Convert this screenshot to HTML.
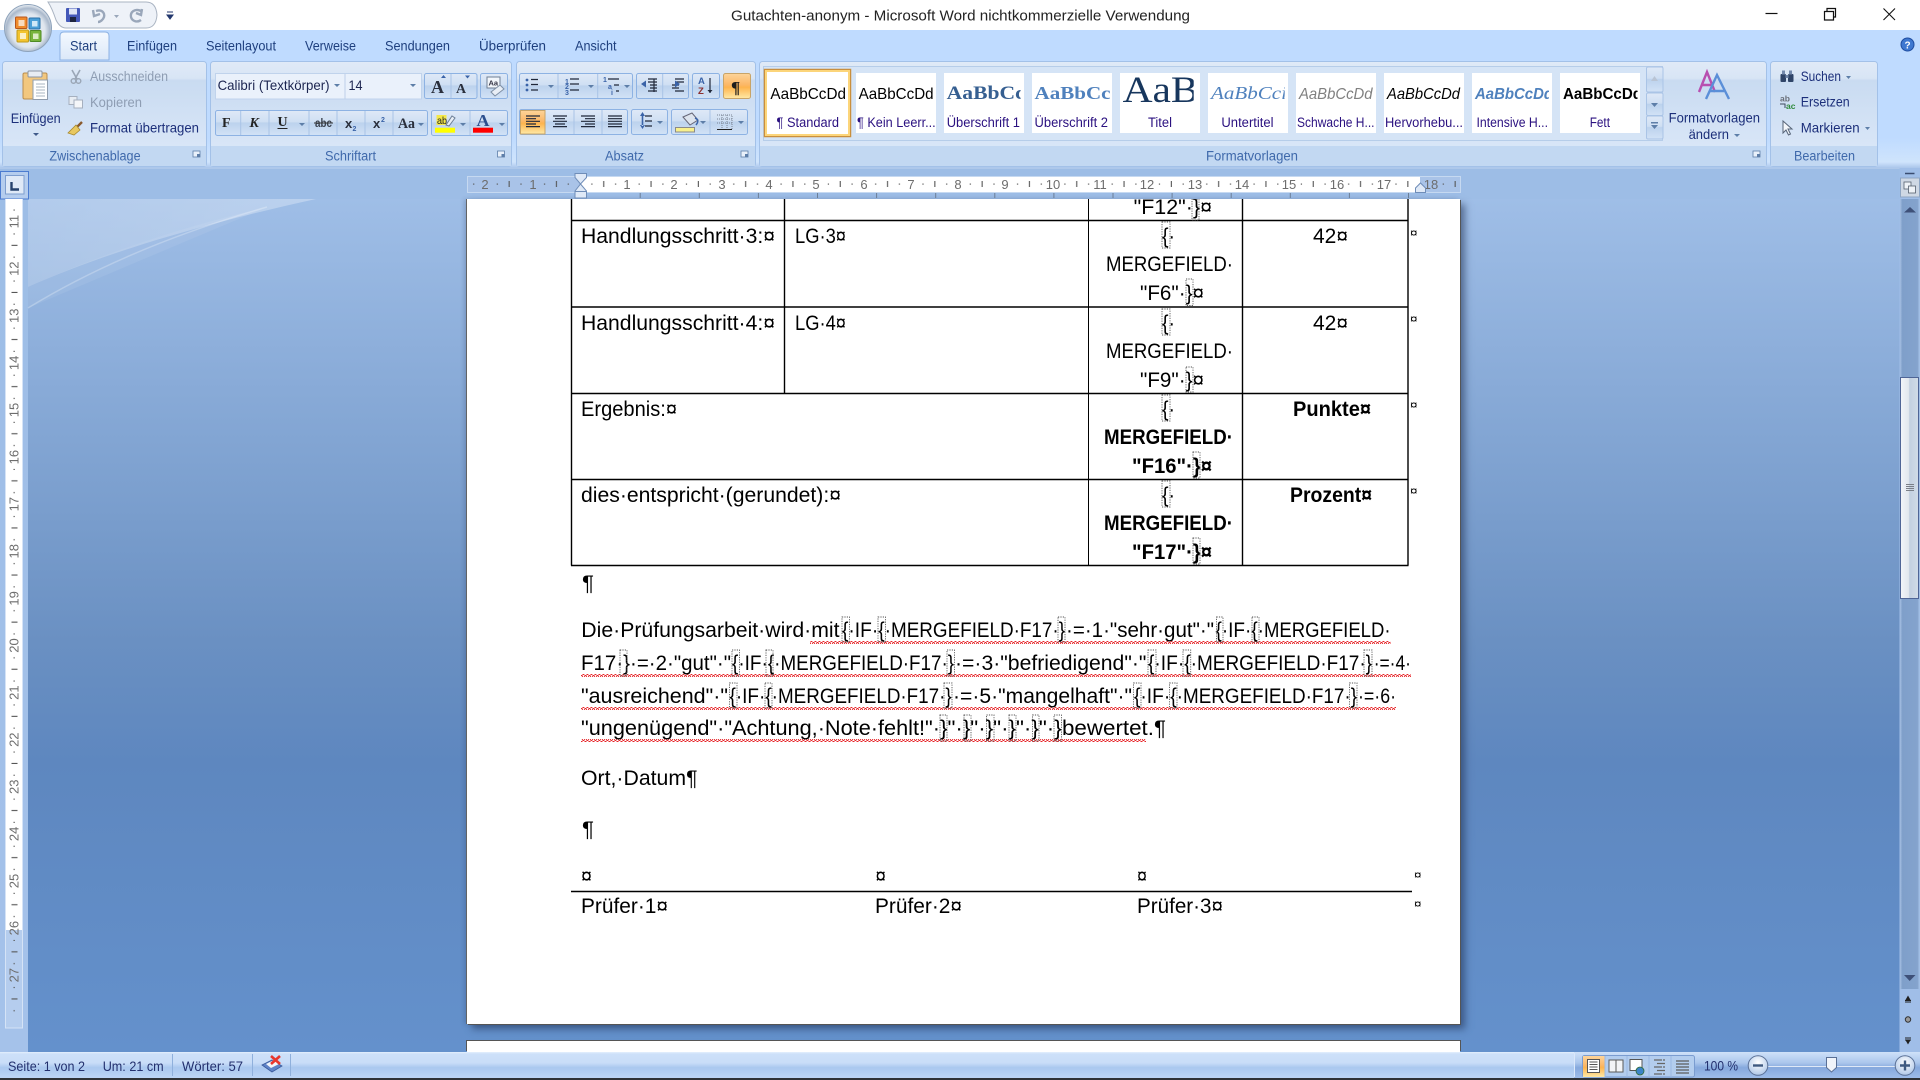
<!DOCTYPE html>
<html lang="de">
<head>
<meta charset="utf-8">
<title>Gutachten-anonym - Microsoft Word</title>
<style>
html,body{margin:0;padding:0;width:1920px;height:1080px;overflow:hidden;background:#fff}
#wrap{position:relative;width:1920px;height:1080px;overflow:hidden}
.abs{position:absolute}
#tabs{left:0;top:30px;width:1920px;height:138px;background:linear-gradient(#bfdbff 0,#bfdbff 108px,#cfe4fc 132px,#aac6ea 138px)}
#rulerbar{left:0;top:168px;width:1920px;height:31px;background:#9dbde6;border-top:1px solid #aec8ea;box-sizing:border-box}
#doc{left:0;top:199px;width:1920px;height:853px;background:linear-gradient(#9fbee7 0,#6a90c2 52%,#5e87bf 66%,#6491cc 100%)}
#leftstrip{left:0;top:199px;width:28px;height:853px;background:linear-gradient(#9dbde6,#a5c2ea)}
#page1{left:467px;top:199px;width:993px;height:825px;background:#fff;box-shadow:1px 1px 0 #555,5px 5px 7px rgba(30,45,80,.55),-1px 0 0 #666,-3px 0 4px rgba(40,60,100,.2)}
#page2{left:467px;top:1041px;width:993px;height:11px;background:#fff;box-shadow:-1px -1px 0 #555,1px -1px 0 #555}
#status{left:0;top:1052px;width:1920px;height:26px;background:linear-gradient(#e4effd 0,#cde0f9 2px,#c9ddf8 42%,#aac8ef 60%,#bcd5f5 100%)}
#status2{left:1574px;top:1052px;width:346px;height:26px;background:linear-gradient(#cfe1f9 0,#aac6ec 42%,#86a9dd 60%,#9dbce9 100%)}
#bottom{left:0;top:1078px;width:1920px;height:2px;background:#2e3236}
svg{position:absolute;left:0;top:0}
text{font-family:"Liberation Sans",sans-serif}
.d{font-size:21px;fill:#000}
.db{font-size:21px;fill:#000;font-weight:bold}
.m{font-size:12px;fill:#000}
.t{font-size:14px;fill:#1e3f7e}
.r{font-size:14px;fill:#1c2f7a}
.g{font-size:14px;fill:#8e9db3}
.l{font-size:13.5px;fill:#3f69ab}
.s{font-size:13.5px;fill:#2b1180}
.rn{font-size:13px;fill:#6d6d6d;text-anchor:middle}
.vn{font-size:13px;fill:#6d6d6d;text-anchor:middle;dominant-baseline:central}
.st{font-size:14px;fill:#23306e}
</style>
</head>
<body>
<div id="wrap">
<div class="abs" id="tabs"></div>
<div class="abs" id="rulerbar"></div>
<div class="abs" id="doc"></div>
<div class="abs" id="leftstrip"></div>
<div class="abs" id="page1"></div>
<div class="abs" id="page2"></div>
<div class="abs" id="status"></div>
<div class="abs" id="status2"></div>
<div class="abs" id="bottom"></div>

<svg width="1920" height="1080" viewBox="0 0 1920 1080">
<defs>
<linearGradient id="grp" x1="0" y1="0" x2="0" y2="1"><stop offset="0" stop-color="#e0eaf7"/><stop offset=".16" stop-color="#d8e5f5"/><stop offset=".18" stop-color="#c9dbf1"/><stop offset="1" stop-color="#dde9f9"/></linearGradient>
<linearGradient id="btn" x1="0" y1="0" x2="0" y2="1"><stop offset="0" stop-color="#dfe9f7"/><stop offset=".45" stop-color="#cfdff3"/><stop offset=".5" stop-color="#bcd2ed"/><stop offset="1" stop-color="#d2e2f6"/></linearGradient>
<linearGradient id="act" x1="0" y1="0" x2="0" y2="1"><stop offset="0" stop-color="#fdd49a"/><stop offset=".45" stop-color="#fbb767"/><stop offset=".55" stop-color="#fdb44e"/><stop offset="1" stop-color="#ffe9a6"/></linearGradient>
<linearGradient id="tab" x1="0" y1="0" x2="0" y2="1"><stop offset="0" stop-color="#f4f9ff"/><stop offset="1" stop-color="#dbe8f8"/></linearGradient>
<linearGradient id="thumb" x1="0" y1="0" x2="1" y2="0"><stop offset="0" stop-color="#f2f5f9"/><stop offset=".45" stop-color="#e2e7ee"/><stop offset=".5" stop-color="#c3d0e0"/><stop offset="1" stop-color="#d1dce8"/></linearGradient>
<linearGradient id="trk" x1="0" y1="0" x2="1" y2="0"><stop offset="0" stop-color="#a5bfe2"/><stop offset=".12" stop-color="#7f9fca"/><stop offset=".9" stop-color="#84a3cd"/><stop offset="1" stop-color="#a6c1e6"/></linearGradient>
<linearGradient id="swoosh" x1="0" y1="0" x2="1" y2="0"><stop offset="0" stop-color="#fff" stop-opacity=".2"/><stop offset="1" stop-color="#fff" stop-opacity=".3"/></linearGradient>
<radialGradient id="orb" cx=".5" cy=".55" r=".55"><stop offset="0" stop-color="#f5f8fc"/><stop offset=".65" stop-color="#dfe6ee"/><stop offset=".85" stop-color="#a9b8cb"/><stop offset="1" stop-color="#eef2f6"/></radialGradient>
<radialGradient id="zoomb" cx=".5" cy=".35" r=".7"><stop offset="0" stop-color="#fff"/><stop offset="1" stop-color="#a9c3e6"/></radialGradient>
<pattern id="wave" patternUnits="userSpaceOnUse" width="4" height="3"><path d="M0 2.5L1 .5L2 .5L3 2.5L4 2.5" fill="none" stroke="#e6262a" stroke-width=".9"/></pattern>
<pattern id="hr" patternUnits="userSpaceOnUse" x="580" y="176" width="47.3" height="16"><rect x="11.3" y="7.5" width="1.2" height="1.2" fill="#555"/><rect x="23.2" y="5" width="1.1" height="6" fill="#555"/><rect x="35" y="7.5" width="1.2" height="1.2" fill="#555"/></pattern>
<pattern id="hb" patternUnits="userSpaceOnUse" x="580.6" y="193" width="59.1" height="5"><rect x="0" y="0" width="1" height="5" fill="#6b7d96"/></pattern>
<pattern id="vr" patternUnits="userSpaceOnUse" x="5" y="221.6" width="18" height="47.1"><rect x="8.5" y="11.8" width="1.3" height="1.1" fill="#555"/><rect x="6.5" y="23.2" width="6" height="1.1" fill="#555"/><rect x="8.5" y="35" width="1.3" height="1.1" fill="#555"/></pattern>
<clipPath id="docclip"><rect x="467" y="199" width="993" height="825"/></clipPath>
<clipPath id="c1"><rect x="944" y="73" width="76.6" height="40"/></clipPath>
<clipPath id="c2"><rect x="1032" y="73" width="78" height="40"/></clipPath>
<clipPath id="c3"><rect x="1120" y="73" width="73.7" height="40"/></clipPath>
<clipPath id="c4"><rect x="1208" y="73" width="76.7" height="40"/></clipPath>
<clipPath id="c5"><rect x="1472" y="73" width="77" height="40"/></clipPath>
<clipPath id="c6"><rect x="1560" y="73" width="77.6" height="40"/></clipPath>
<clipPath id="c7"><rect x="856" y="73" width="78" height="40"/></clipPath>
</defs>

<!-- title bar -->
<text x="731" y="20.5" font-size="15" fill="#222" textLength="459" lengthAdjust="spacingAndGlyphs">Gutachten-anonym - Microsoft Word nichtkommerzielle Verwendung</text>
<path d="M1765.5 13.5H1777.5" stroke="#111" stroke-width="1.2"/>
<path d="M1824.5 11.5h9v8.5h-9zM1827 11.5V8.5h8.5v8.5h-2" fill="none" stroke="#111" stroke-width="1.2"/>
<path d="M1883.5 8.5L1895 20M1895 8.5L1883.5 20" stroke="#111" stroke-width="1.1"/>

<!-- quick access -->
<path d="M48 2H146Q156 2 157 15Q156 28 146 28H66Q60 28 56 20Q52 8 48 2Z" fill="#eef2f8" stroke="#aab4c2"/>
<rect x="66" y="8" width="14" height="14" rx="1" fill="#4458b8"/><rect x="69" y="8.5" width="8" height="6" fill="#dfe5f5"/><rect x="70" y="17" width="6" height="5" fill="#1d2540"/>
<path d="M96 11C102 9 105 13 104 17C103 20 100 22 98 22M93 10L94 16L100 14" fill="none" stroke="#9aa7ba" stroke-width="2.4"/>
<path d="M114 15h5l-2.5 3z" fill="#9aa7ba"/>
<path d="M141 11C135 8 130 12 131 17C132 21 137 23 141 20M142 9L141 15L136 13" fill="none" stroke="#9aa7ba" stroke-width="2.4"/>
<path d="M167 12h6M167 15h6l-3 4z" stroke="#24386e" fill="#24386e" stroke-width="1"/>

<!-- office button -->
<circle cx="28" cy="28" r="23.5" fill="url(#orb)" stroke="#8ea3bb"/>
<rect x="15.5" y="17" width="11.5" height="11.5" rx="1" fill="#ef8b2c" stroke="#b8561c"/><rect x="18.5" y="20" width="6" height="6" fill="#f8dcc0"/>
<rect x="29" y="18" width="11" height="11" rx="1" fill="#4a9fd8" stroke="#2a70a8"/><rect x="32" y="21" width="5.5" height="5.5" fill="#cfe8f8"/>
<rect x="17" y="30" width="11.5" height="12" rx="1" fill="#f3c42f" stroke="#c29a18"/><rect x="20" y="33" width="6" height="6" fill="#fbf0c4"/>
<rect x="30" y="30.5" width="11" height="11" rx="1" fill="#78b43c" stroke="#4f8a24"/><rect x="33" y="33.5" width="5.5" height="5.5" fill="#dcecc4"/>

<!-- tabs -->
<path d="M60 60V36Q60 32 64 32H105Q109 32 109 36V60Z" fill="url(#tab)" stroke="#8db2e3"/>
<text class="t" x="70" y="50.7" textLength="27" lengthAdjust="spacingAndGlyphs">Start</text>
<text class="t" x="127" y="50.7" textLength="50" lengthAdjust="spacingAndGlyphs">Einfügen</text>
<text class="t" x="206" y="50.7" textLength="70" lengthAdjust="spacingAndGlyphs">Seitenlayout</text>
<text class="t" x="305" y="50.7" textLength="51" lengthAdjust="spacingAndGlyphs">Verweise</text>
<text class="t" x="385" y="50.7" textLength="65" lengthAdjust="spacingAndGlyphs">Sendungen</text>
<text class="t" x="479" y="50.7" textLength="67" lengthAdjust="spacingAndGlyphs">Überprüfen</text>
<text class="t" x="575" y="50.7" textLength="41.5" lengthAdjust="spacingAndGlyphs">Ansicht</text>
<circle cx="1907.5" cy="44.5" r="6.5" fill="#3f78d0" stroke="#1f4da0"/><text x="1904.5" y="48.5" font-size="10" font-weight="bold" fill="#fff">?</text>

<!-- ribbon panel groups -->
<g stroke="#a3c1e8">
<rect x="2.5" y="61.5" width="204" height="105" rx="3" fill="url(#grp)"/>
<rect x="210.5" y="61.5" width="301" height="105" rx="3" fill="url(#grp)"/>
<rect x="516.5" y="61.5" width="239" height="105" rx="3" fill="url(#grp)"/>
<rect x="759.5" y="61.5" width="1007" height="105" rx="3" fill="url(#grp)"/>
<rect x="1770.5" y="61.5" width="107" height="105" rx="3" fill="url(#grp)"/>
</g>
<g fill="#c2d8f2">
<rect x="3" y="146" width="203" height="20"/>
<rect x="211" y="146" width="300" height="20"/>
<rect x="517" y="146" width="238" height="20"/>
<rect x="760" y="146" width="1006" height="20"/>
<rect x="1771" y="146" width="106" height="20"/>
</g>
<text class="l" x="49.4" y="160.7" textLength="91.2" lengthAdjust="spacingAndGlyphs">Zwischenablage</text>
<text class="l" x="325" y="160.7" textLength="51" lengthAdjust="spacingAndGlyphs">Schriftart</text>
<text class="l" x="605" y="160.7" textLength="39" lengthAdjust="spacingAndGlyphs">Absatz</text>
<text class="l" x="1206" y="160.7" textLength="92" lengthAdjust="spacingAndGlyphs">Formatvorlagen</text>
<text class="l" x="1794" y="160.7" textLength="61" lengthAdjust="spacingAndGlyphs">Bearbeiten</text>
<g fill="#e8f0fa" stroke="#5d7ea8" stroke-width=".8">
<rect x="193" y="151" width="7" height="6"/><rect x="497.5" y="151" width="7" height="6"/><rect x="741" y="151" width="7" height="6"/><rect x="1753" y="151" width="7" height="6"/>
</g>
<g fill="#5d7ea8"><rect x="197" y="154" width="3" height="3"/><rect x="501.5" y="154" width="3" height="3"/><rect x="745" y="154" width="3" height="3"/><rect x="1757" y="154" width="3" height="3"/></g>

<!-- clipboard group -->
<rect x="23" y="73" width="24" height="26" rx="1.5" fill="#f2c77e" stroke="#b98d4e"/>
<rect x="28" y="71" width="14" height="6" rx="1" fill="#e8edf3" stroke="#8b95a3"/>
<rect x="33" y="80" width="14.5" height="19.5" fill="#fff" stroke="#8f9cad"/>
<path d="M36 84h9M36 87h9M36 90h9M36 93h9M36 96h9" stroke="#aab4c2"/>
<text class="r" x="10.7" y="123" textLength="50" lengthAdjust="spacingAndGlyphs">Einfügen</text>
<path d="M33 133h6l-3 3z" fill="#405a8a"/>
<path d="M72 70L77 79M80 70L75 79" stroke="#9aa6b6" stroke-width="1.6"/><circle cx="73.5" cy="81" r="2.3" fill="none" stroke="#9aa6b6" stroke-width="1.4"/><circle cx="78.5" cy="81" r="2.3" fill="none" stroke="#9aa6b6" stroke-width="1.4"/>
<text class="g" x="90" y="81" textLength="78" lengthAdjust="spacingAndGlyphs">Ausschneiden</text>
<rect x="69" y="96.5" width="8" height="8" fill="#e8edf3" stroke="#a6b0bf"/><rect x="74" y="100" width="8.5" height="8" fill="#f4f6f9" stroke="#a6b0bf"/>
<text class="g" x="90" y="107" textLength="52" lengthAdjust="spacingAndGlyphs">Kopieren</text>
<path d="M82 122L76 128" stroke="#8a5a2c" stroke-width="2.4"/><path d="M76 125L80 130L74 135L68 133Z" fill="#e8c860" stroke="#a88a30" stroke-width=".8"/>
<text class="r" x="90" y="132.7" textLength="109" lengthAdjust="spacingAndGlyphs">Format übertragen</text>

<!-- font group -->
<rect x="215.5" y="73.5" width="206" height="25.5" fill="#eaf1fb" stroke="#c0d3ec"/>
<path d="M345 74V99" stroke="#bdd0e9"/>
<text x="217.6" y="90" font-size="14" fill="#1c2550" textLength="112" lengthAdjust="spacingAndGlyphs">Calibri (Textkörper)</text>
<text x="348.5" y="90" font-size="14" fill="#1c2550" textLength="14" lengthAdjust="spacingAndGlyphs">14</text>
<path d="M334 84h6l-3 3zM410 84h6l-3 3z" fill="#5d7ea8"/>
<g stroke="#8db2e3" fill="url(#btn)">
<rect x="424.5" y="73.5" width="52.5" height="25" rx="2"/>
<rect x="480.5" y="73.5" width="27" height="25" rx="2"/>
<rect x="215.5" y="110.5" width="212" height="25" rx="2"/>
<rect x="431.5" y="110.5" width="76" height="25" rx="2"/>
<rect x="519.5" y="73.5" width="113" height="25" rx="2"/>
<rect x="636.5" y="73.5" width="52" height="25" rx="2"/>
<rect x="692.5" y="73.5" width="27" height="25" rx="2"/>
<rect x="519.5" y="109.5" width="108" height="25" rx="2"/>
<rect x="631.5" y="109.5" width="36" height="25" rx="2"/>
<rect x="671.5" y="109.5" width="76" height="25" rx="2"/>
</g>
<rect x="723.5" y="73.5" width="27" height="25" rx="2" fill="url(#act)" stroke="#c8a468"/>
<path d="M520.5 110.5H545V134H520.5Z" fill="url(#act)" stroke="#c8a468"/>
<path d="M451 74V98M240.7 111V135M269 111V135M309 111V135M337 111V135M365 111V135M393 111V135M470 111V135M558 74V98M597.7 74V98M662.7 74V98M574 110V134M602 110V134M710 110V134" stroke="#a9c3e6"/>
<text x="431" y="93" font-family="Liberation Serif" font-size="18" font-weight="bold" fill="#2a2f3c" style="font-family:'Liberation Serif',serif">A</text>
<text x="456" y="93" font-size="14" font-weight="bold" fill="#2a2f3c" style="font-family:'Liberation Serif',serif">A</text>
<path d="M441 78l2.5-3 2.5 3zM465 75.5h5l-2.5 3z" fill="#3a63a8"/>
<rect x="487" y="77" width="13" height="11" fill="#f2f6fb" stroke="#6f7f94"/><text x="488.5" y="85.5" font-size="7.5" font-weight="bold" fill="#334">Aa</text>
<path d="M491 92L500 85L504 89L495 96Z" fill="#e8eef6" stroke="#7d8ea4"/>
<text x="222" y="127" font-size="14" font-weight="bold" fill="#222" style="font-family:'Liberation Serif',serif">F</text>
<text x="249.5" y="127" font-size="14" font-weight="bold" font-style="italic" fill="#222" style="font-family:'Liberation Serif',serif">K</text>
<text x="277.5" y="126" font-size="14" font-weight="bold" fill="#222" style="font-family:'Liberation Serif',serif">U</text><path d="M277.5 128.5h10" stroke="#222"/>
<path d="M299 123h6l-3 3zM418 123h6l-3 3zM460 123h6l-3 3zM499 123h6l-3 3z" fill="#5d7ea8"/>
<text x="315" y="127" font-size="12" font-weight="bold" fill="#3c4350" textLength="17" lengthAdjust="spacingAndGlyphs">abc</text><path d="M314 123h19" stroke="#333"/>
<text x="345" y="128" font-size="13" font-weight="bold" fill="#2a2f3c">x</text><text x="352.5" y="131" font-size="7" font-weight="bold" fill="#3a63a8">2</text>
<text x="373" y="128" font-size="13" font-weight="bold" fill="#2a2f3c">x</text><text x="381" y="122" font-size="7" font-weight="bold" fill="#3a63a8">2</text>
<text x="398" y="128" font-size="15" font-weight="bold" fill="#2a2f3c" style="font-family:'Liberation Serif',serif" textLength="17" lengthAdjust="spacingAndGlyphs">Aa</text>
<rect x="436.5" y="115" width="10" height="10" fill="#f4e84a"/><text x="437" y="124" font-size="10.5" fill="#222" textLength="10" lengthAdjust="spacingAndGlyphs">ab</text>
<path d="M446 125L452 116L455 118L449 126Z" fill="#e8eef6" stroke="#6d7f97"/>
<rect x="435" y="127.7" width="20" height="5" fill="#ffff00"/>
<text x="476.5" y="126" font-size="17" font-weight="bold" fill="#2c4f8e" style="font-family:'Liberation Serif',serif" textLength="13" lengthAdjust="spacingAndGlyphs">A</text>
<rect x="473" y="127.7" width="20" height="5" fill="#ff0000"/>

<!-- paragraph group -->
<g stroke="#20283a" stroke-width="1.2" fill="none">
<path d="M531 79.5h7M531 84.5h7M531 90h7M531 85"/>
<path d="M570 79h9M570 84h9M570 90h9"/>
<path d="M608 79h11M614 85h5M616 91h3"/>
<path d="M648 79h9M648 82h9M650 85h7M650 88h7M648 91h9M654 79v13"/>
<path d="M675 79h9M675 82h9M672 85h7M672 88h7M675 91h9"/>
<path d="M710 78v15"/>
<path d="M526 116h14M526 118.7h10M526 121.3h14M526 124h10M526 126.6h14" />
<path d="M553 116h14M555 118.7h10M553 121.3h14M555 124h10M553 126.6h14"/>
<path d="M581 116h14M585 118.7h10M581 121.3h14M585 124h10M581 126.6h14"/>
<path d="M608 116h14M608 118.7h14M608 121.3h14M608 124h14M608 126.6h14"/>
<path d="M645 116h7M645 121h7M645 126h7"/>
</g>
<g fill="#3a63a8">
<circle cx="527" cy="80" r="1.4"/><circle cx="527" cy="85" r="1.4"/><circle cx="527" cy="90" r="1.4"/>
<path d="M641 84l5-3.5v7zM680 84l-5-3.5v7zM638.5 84h0z"/>
<path d="M640 116l2.5-4 2.5 4zM640 125l2.5 4 2.5-4zM641.7 115h1.6v11h-1.6z"/>
</g>
<text x="565" y="84" font-size="7" font-weight="bold" fill="#3a63a8">1</text><text x="565" y="89" font-size="7" font-weight="bold" fill="#3a63a8">2</text><text x="565" y="95" font-size="7" font-weight="bold" fill="#3a63a8">3</text>
<text x="603" y="82" font-size="7" font-weight="bold" fill="#3a63a8">1</text><text x="608" y="89" font-size="7" font-weight="bold" fill="#3a63a8">a</text><text x="611" y="95" font-size="7" font-weight="bold" fill="#3a63a8">i</text>
<path d="M548 85h6l-3 3zM588 85h6l-3 3zM624 85h6l-3 3zM657 121h6l-3 3zM700 121h6l-3 3zM738 121h6l-3 3z" fill="#5d7ea8"/>
<text x="698" y="84" font-size="9.5" font-weight="bold" fill="#3a63a8">A</text><text x="698" y="94" font-size="9.5" font-weight="bold" fill="#8b3030">Z</text>
<path d="M710 93l-2.5-3h5z" fill="#20283a"/>
<text x="731" y="93" font-size="17" font-weight="bold" fill="#1c1c1c" style="font-family:'Liberation Serif',serif">¶</text>
<path d="M683 117L692 113L698 120L690 125Z" fill="#dde4ee" stroke="#667"/><path d="M695 118q5 2 1 7" stroke="#3a63a8" stroke-width="1.5" fill="none"/>
<rect x="675.5" y="127.5" width="19" height="4.5" fill="#f8f08c" stroke="#8a8a8a"/>
<path d="M717 115h15v14M717 119h15M717 123h15M722 115v14M727 115v14" stroke="#7a8494" stroke-dasharray="1 1" fill="none"/><path d="M717 129.5h15" stroke="#222"/>

<!-- style gallery -->
<rect x="763.5" y="66.5" width="899" height="74" fill="#d5e4f6" stroke="#b6cde9"/>
<rect x="764.5" y="69.5" width="86" height="67" fill="#fff" stroke="#c98f3e" stroke-width="1.5"/>
<rect x="766" y="71" width="83" height="64" fill="none" stroke="#fcd57a" stroke-width="2"/>
<g fill="#fff"><rect x="856" y="73" width="80" height="60"/><rect x="944" y="73" width="80" height="60"/><rect x="1032" y="73" width="80" height="60"/><rect x="1120" y="73" width="80" height="60"/><rect x="1208" y="73" width="80" height="60"/><rect x="1296" y="73" width="80" height="60"/><rect x="1384" y="73" width="80" height="60"/><rect x="1472" y="73" width="80" height="60"/><rect x="1560" y="73" width="80" height="60"/></g>
<text x="770.4" y="99" font-size="16" fill="#000" textLength="75.6" lengthAdjust="spacingAndGlyphs">AaBbCcDd</text>
<text x="858.6" y="99" font-size="16" fill="#000" textLength="75" lengthAdjust="spacingAndGlyphs">AaBbCcDd</text>
<text x="946.7" y="99" font-size="19" font-weight="bold" fill="#365f91" style="font-family:'Liberation Serif',serif" clip-path="url(#c1)" textLength="78" lengthAdjust="spacingAndGlyphs">AaBbCc</text>
<text x="1034.5" y="99" font-size="17.5" font-weight="bold" fill="#4f81bd" style="font-family:'Liberation Serif',serif" clip-path="url(#c2)" textLength="76" lengthAdjust="spacingAndGlyphs">AaBbCc</text>
<text x="1122.6" y="102" font-size="37" fill="#17365d" style="font-family:'Liberation Serif',serif" clip-path="url(#c3)" textLength="76" lengthAdjust="spacingAndGlyphs">AaB</text>
<text x="1211" y="99" font-size="17.5" font-style="italic" fill="#4f81bd" style="font-family:'Liberation Serif',serif" clip-path="url(#c4)" textLength="76" lengthAdjust="spacingAndGlyphs">AaBbCci</text>
<text x="1299" y="99" font-size="16" font-style="italic" fill="#808080" textLength="73.5" lengthAdjust="spacingAndGlyphs">AaBbCcDd</text>
<text x="1387" y="99" font-size="16" font-style="italic" fill="#000" textLength="73" lengthAdjust="spacingAndGlyphs">AaBbCcDd</text>
<text x="1475" y="99" font-size="16" font-style="italic" font-weight="bold" fill="#4f81bd" clip-path="url(#c5)" textLength="78" lengthAdjust="spacingAndGlyphs">AaBbCcDd</text>
<text x="1563" y="99" font-size="16" font-weight="bold" fill="#000" clip-path="url(#c6)" textLength="79" lengthAdjust="spacingAndGlyphs">AaBbCcDd</text>
<text class="s" x="776.5" y="127" textLength="62.5" lengthAdjust="spacingAndGlyphs">¶ Standard</text>
<text class="s" x="857" y="127" textLength="78.7" lengthAdjust="spacingAndGlyphs">¶ Kein Leerr...</text>
<text class="s" x="946.7" y="127" textLength="73.3" lengthAdjust="spacingAndGlyphs">Überschrift 1</text>
<text class="s" x="1034.5" y="127" textLength="73.5" lengthAdjust="spacingAndGlyphs">Überschrift 2</text>
<text class="s" x="1148" y="127" textLength="24" lengthAdjust="spacingAndGlyphs">Titel</text>
<text class="s" x="1221.4" y="127" textLength="52.2" lengthAdjust="spacingAndGlyphs">Untertitel</text>
<text class="s" x="1297" y="127" textLength="77.5" lengthAdjust="spacingAndGlyphs">Schwache H...</text>
<text class="s" x="1385" y="127" textLength="78" lengthAdjust="spacingAndGlyphs">Hervorhebu...</text>
<text class="s" x="1476.5" y="127" textLength="71.5" lengthAdjust="spacingAndGlyphs">Intensive H...</text>
<text class="s" x="1589.7" y="127" textLength="20.3" lengthAdjust="spacingAndGlyphs">Fett</text>
<g stroke="#aac4e6" fill="url(#btn)"><rect x="1646.5" y="67" width="16.5" height="25" rx="1.5"/><rect x="1646.5" y="93" width="16.5" height="22.5" rx="1.5"/><rect x="1646.5" y="116" width="16.5" height="23" rx="1.5"/></g>
<path d="M1651 81l3.500-5 3.500 5z" fill="#b9c4d4"/><path d="M1651 103h7l-3.500 4z" fill="#5d7ea8"/><path d="M1651 122h7v1.500h-7zM1651 125h7l-3.500 4z" fill="#5d7ea8"/>
<path d="M1699 92L1707 72L1715 92M1702.500 85H1712" fill="none" stroke="#b84fb0" stroke-width="2.400"/>
<path d="M1706 99L1717 75L1729 99M1710 91H1724" fill="none" stroke="#5b8fd8" stroke-width="2.400"/>
<text class="r" x="1668.600" y="122.700" textLength="91.400" lengthAdjust="spacingAndGlyphs">Formatvorlagen</text>
<text class="r" x="1688.600" y="139" textLength="40.400" lengthAdjust="spacingAndGlyphs">ändern</text>
<path d="M1734 134h6l-3 3z" fill="#5d7ea8"/>

<!-- edit group -->
<rect x="1780.500" y="74" width="5.500" height="8" rx="1" fill="#2f4468"/><rect x="1788" y="74" width="5.500" height="8" rx="1" fill="#2f4468"/><rect x="1782" y="70.500" width="3" height="4" fill="#7389ad"/><rect x="1789" y="70.500" width="3" height="4" fill="#7389ad"/><rect x="1785.500" y="75" width="3" height="3" fill="#7389ad"/>
<text class="r" x="1800.700" y="81" textLength="40.300" lengthAdjust="spacingAndGlyphs">Suchen</text>
<path d="M1846 76h5l-2.500 3z" fill="#5d7ea8"/>
<text x="1780" y="101.500" font-size="8.500" font-weight="bold" fill="#6a6f78">ab</text>
<text x="1786" y="109" font-size="8.500" font-weight="bold" fill="#2f8a3c">ac</text>
<path d="M1780 104h5v4" fill="none" stroke="#3d4a5e"/>
<text class="r" x="1800.700" y="106.700" textLength="49" lengthAdjust="spacingAndGlyphs">Ersetzen</text>
<path d="M1783 121V133L1786 130L1788.500 135L1790.500 134L1788 129H1792Z" fill="#f4f7fb" stroke="#566478"/>
<text class="r" x="1800.700" y="132.700" textLength="59" lengthAdjust="spacingAndGlyphs">Markieren</text>
<path d="M1865 127h5l-2.500 3z" fill="#5d7ea8"/>

<!-- swoosh on document background -->
<path d="M28 199H316C220 220 110 250 28 287Z" fill="url(#swoosh)"/>
<path d="M28 308C90 270 170 235 267 207" fill="none" stroke="#fff" stroke-opacity=".25" stroke-width="1.500"/>
<path d="M28 287C110 250 190 225 267 207L28 308Z" fill="#fff" fill-opacity=".07"/>

<!-- horizontal ruler -->
<rect x="467.500" y="176.500" width="993" height="16" fill="#a9c3e8" stroke="#c6d9f1"/>
<rect x="580" y="177" width="840" height="15" fill="#fff"/>
<rect x="467" y="176" width="994" height="16" fill="url(#hr)"/>
<rect x="580" y="193" width="830" height="5" fill="url(#hb)"/>
<g>
<text class="rn" x="485" y="189">2</text><text class="rn" x="533" y="189">1</text>
<text class="rn" x="627" y="189">1</text><text class="rn" x="674" y="189">2</text><text class="rn" x="722" y="189">3</text><text class="rn" x="769" y="189">4</text><text class="rn" x="816" y="189">5</text><text class="rn" x="864" y="189">6</text><text class="rn" x="911" y="189">7</text><text class="rn" x="958" y="189">8</text><text class="rn" x="1005" y="189">9</text><text class="rn" x="1053" y="189">10</text><text class="rn" x="1100" y="189">11</text><text class="rn" x="1147" y="189">12</text><text class="rn" x="1195" y="189">13</text><text class="rn" x="1242" y="189">14</text><text class="rn" x="1289" y="189">15</text><text class="rn" x="1337" y="189">16</text><text class="rn" x="1384" y="189">17</text><text class="rn" x="1431" y="189">18</text>
</g>
<path d="M575 173.500H586.500V177.500L580.500 184L575 177.500Z" fill="#dfe9f7" stroke="#6f8db8"/>
<path d="M580.500 184L586.500 191V198H575V191Z" fill="#dfe9f7" stroke="#6f8db8"/><path d="M575 191.500H586.500" stroke="#6f8db8"/>
<path d="M1415.500 192.500V188L1420.500 183L1425.500 188V192.500Z" fill="#dfe9f7" stroke="#6f8db8"/>

<!-- corner tab button -->
<rect x="0.500" y="171.500" width="28" height="27.500" fill="#b5cdee" stroke="#4c7cd0"/>
<rect x="5.500" y="175.500" width="18.500" height="18.500" fill="#dfe9f7" stroke="#7e9ecf"/>
<path d="M11.500 182V189.500H19" fill="none" stroke="#26426e" stroke-width="2.400"/>

<!-- vertical ruler -->
<rect x="5" y="199" width="18" height="731" fill="#fff"/>
<rect x="5" y="930" width="18" height="98" fill="#b5cdee"/>
<path d="M5.500 199V1028H22.500V199" fill="none" stroke="#d5e3f6"/>
<rect x="5" y="199" width="18" height="829" fill="url(#vr)"/>
<g>
<text class="vn" transform="rotate(-90 14 221.600)" x="14" y="221.600">11</text>
<text class="vn" transform="rotate(-90 14 268.700)" x="14" y="268.700">12</text>
<text class="vn" transform="rotate(-90 14 315.800)" x="14" y="315.800">13</text>
<text class="vn" transform="rotate(-90 14 362.900)" x="14" y="362.900">14</text>
<text class="vn" transform="rotate(-90 14 410)" x="14" y="410">15</text>
<text class="vn" transform="rotate(-90 14 457.100)" x="14" y="457.100">16</text>
<text class="vn" transform="rotate(-90 14 504.200)" x="14" y="504.200">17</text>
<text class="vn" transform="rotate(-90 14 551.300)" x="14" y="551.300">18</text>
<text class="vn" transform="rotate(-90 14 598.400)" x="14" y="598.400">19</text>
<text class="vn" transform="rotate(-90 14 645.500)" x="14" y="645.500">20</text>
<text class="vn" transform="rotate(-90 14 692.600)" x="14" y="692.600">21</text>
<text class="vn" transform="rotate(-90 14 739.700)" x="14" y="739.700">22</text>
<text class="vn" transform="rotate(-90 14 786.800)" x="14" y="786.800">23</text>
<text class="vn" transform="rotate(-90 14 833.900)" x="14" y="833.900">24</text>
<text class="vn" transform="rotate(-90 14 881)" x="14" y="881">25</text>
<text class="vn" transform="rotate(-90 14 928.100)" x="14" y="928.100">26</text>
<text class="vn" transform="rotate(-90 14 975.200)" x="14" y="975.200">27</text>
</g>

<!-- document content -->
<g clip-path="url(#docclip)">
<!-- table lines -->
<g stroke="#000" stroke-width="1.400">
<path d="M571.500 199V565.500M784.500 199V393.500M1242.500 199V565.500M1408 199V565.500"/>
<path d="M571 220.500H1408.500M571 307H1408.500M571 393.500H1408.500M571 479.500H1408.500M571 565.500H1408.500"/>
</g>
<path d="M1088.500 199V565.500" stroke="#000" stroke-width="1"/>
<!-- row 2 tail -->
<text class="d" x="1133.600" y="214" textLength="78.400" lengthAdjust="spacingAndGlyphs">"F12"·}¤</text>
<!-- row 3 -->
<text class="d" x="581" y="243" textLength="194" lengthAdjust="spacingAndGlyphs">Handlungsschritt·3:¤</text>
<text class="d" x="795" y="243" textLength="51" lengthAdjust="spacingAndGlyphs">LG·3¤</text>
<text class="d" x="1162" y="243" textLength="13" lengthAdjust="spacingAndGlyphs">{·</text>
<text class="d" x="1106" y="271" textLength="127" lengthAdjust="spacingAndGlyphs">MERGEFIELD·</text>
<text class="d" x="1140" y="300" textLength="64" lengthAdjust="spacingAndGlyphs">"F6"·}¤</text>
<text class="d" x="1313" y="243" textLength="35" lengthAdjust="spacingAndGlyphs">42¤</text>
<text class="m" x="1410" y="237" textLength="7.500" lengthAdjust="spacingAndGlyphs">¤</text>
<!-- row 4 -->
<text class="d" x="581" y="330" textLength="194" lengthAdjust="spacingAndGlyphs">Handlungsschritt·4:¤</text>
<text class="d" x="795" y="330" textLength="51" lengthAdjust="spacingAndGlyphs">LG·4¤</text>
<text class="d" x="1162" y="330" textLength="13" lengthAdjust="spacingAndGlyphs">{·</text>
<text class="d" x="1106" y="358" textLength="127" lengthAdjust="spacingAndGlyphs">MERGEFIELD·</text>
<text class="d" x="1140" y="387" textLength="64" lengthAdjust="spacingAndGlyphs">"F9"·}¤</text>
<text class="d" x="1313" y="330" textLength="35" lengthAdjust="spacingAndGlyphs">42¤</text>
<text class="m" x="1410" y="323" textLength="7.500" lengthAdjust="spacingAndGlyphs">¤</text>
<!-- row 5 -->
<text class="d" x="581" y="416" textLength="96" lengthAdjust="spacingAndGlyphs">Ergebnis:¤</text>
<text class="d" x="1162" y="416" textLength="13" lengthAdjust="spacingAndGlyphs">{·</text>
<text class="db" x="1104" y="444" textLength="129" lengthAdjust="spacingAndGlyphs">MERGEFIELD·</text>
<text class="db" x="1132" y="473" textLength="80" lengthAdjust="spacingAndGlyphs">"F16"·}¤</text>
<text class="db" x="1293" y="416" textLength="78" lengthAdjust="spacingAndGlyphs">Punkte¤</text>
<text class="m" x="1410" y="409" textLength="7.500" lengthAdjust="spacingAndGlyphs">¤</text>
<!-- row 6 -->
<text class="d" x="581" y="502" textLength="260" lengthAdjust="spacingAndGlyphs">dies·entspricht·(gerundet):¤</text>
<text class="d" x="1162" y="502" textLength="13" lengthAdjust="spacingAndGlyphs">{·</text>
<text class="db" x="1104" y="530" textLength="129" lengthAdjust="spacingAndGlyphs">MERGEFIELD·</text>
<text class="db" x="1132" y="559" textLength="80" lengthAdjust="spacingAndGlyphs">"F17"·}¤</text>
<text class="db" x="1290" y="502" textLength="82" lengthAdjust="spacingAndGlyphs">Prozent¤</text>
<text class="m" x="1410" y="495" textLength="7.500" lengthAdjust="spacingAndGlyphs">¤</text>
<!-- field boxes in table -->
<g fill="none" stroke="#555" stroke-width=".9" stroke-dasharray="1.200 1.200">
<rect x="1192" y="199" width="7" height="21"/>
<rect x="1162" y="222" width="8" height="26"/><rect x="1186" y="279" width="7" height="26.500"/>
<rect x="1162" y="309" width="8" height="26"/><rect x="1186" y="367" width="7" height="25"/>
<rect x="1162" y="395" width="8" height="26"/><rect x="1193" y="452" width="7" height="26"/>
<rect x="1162" y="481" width="8" height="26"/><rect x="1193" y="538" width="7" height="26"/>
</g>
<text class="d" x="582" y="590" textLength="12" lengthAdjust="spacingAndGlyphs">¶</text>

<!-- paragraph -->
<rect x="810" y="641" width="580.500" height="3" fill="url(#wave)"/>
<rect x="581" y="674" width="830" height="3" fill="url(#wave)"/>
<rect x="581" y="707" width="815" height="3" fill="url(#wave)"/>
<rect x="581" y="739" width="565" height="3" fill="url(#wave)"/>
<!-- line 1 -->
<text class="d" x="581.300" y="637" textLength="258.200" lengthAdjust="spacingAndGlyphs">Die·Prüfungsarbeit·wird·mit</text>
<text class="d" x="842" y="637" textLength="49" lengthAdjust="spacingAndGlyphs">{·IF·{·</text>
<text class="d" x="891" y="637" textLength="174" lengthAdjust="spacingAndGlyphs">MERGEFIELD·F17·}</text>
<text class="d" x="1066" y="637" textLength="148" lengthAdjust="spacingAndGlyphs">·=·1·"sehr·gut"·"</text>
<text class="d" x="1215.500" y="637" textLength="48.500" lengthAdjust="spacingAndGlyphs">{·IF·{·</text>
<text class="d" x="1264" y="637" textLength="126.500" lengthAdjust="spacingAndGlyphs">MERGEFIELD·</text>
<!-- line 2 -->
<text class="d" x="581" y="670" textLength="150" lengthAdjust="spacingAndGlyphs">F17·}·=·2·"gut"·"</text>
<text class="d" x="732" y="670" textLength="48.500" lengthAdjust="spacingAndGlyphs">{·IF·{·</text>
<text class="d" x="780.500" y="670" textLength="173.500" lengthAdjust="spacingAndGlyphs">MERGEFIELD·F17·}</text>
<text class="d" x="955" y="670" textLength="191.400" lengthAdjust="spacingAndGlyphs">·=·3·"befriedigend"·"</text>
<text class="d" x="1148" y="670" textLength="49" lengthAdjust="spacingAndGlyphs">{·IF·{·</text>
<text class="d" x="1197" y="670" textLength="175" lengthAdjust="spacingAndGlyphs">MERGEFIELD·F17·}</text>
<text class="d" x="1373.700" y="670" textLength="37.300" lengthAdjust="spacingAndGlyphs">·=·4·</text>
<!-- line 3 -->
<text class="d" x="581" y="703" textLength="147" lengthAdjust="spacingAndGlyphs">"ausreichend"·"</text>
<text class="d" x="729.500" y="703" textLength="48.500" lengthAdjust="spacingAndGlyphs">{·IF·{·</text>
<text class="d" x="778" y="703" textLength="173.700" lengthAdjust="spacingAndGlyphs">MERGEFIELD·F17·}</text>
<text class="d" x="953" y="703" textLength="179" lengthAdjust="spacingAndGlyphs">·=·5·"mangelhaft"·"</text>
<text class="d" x="1134" y="703" textLength="49" lengthAdjust="spacingAndGlyphs">{·IF·{·</text>
<text class="d" x="1183" y="703" textLength="174" lengthAdjust="spacingAndGlyphs">MERGEFIELD·F17·}</text>
<text class="d" x="1358" y="703" textLength="38" lengthAdjust="spacingAndGlyphs">·=·6·</text>
<!-- line 4 -->
<text class="d" x="581" y="735" textLength="359" lengthAdjust="spacingAndGlyphs">"ungenügend"·"Achtung,·Note·fehlt!"·</text>
<text class="d" x="940" y="735" textLength="121.700" lengthAdjust="spacingAndGlyphs">}"·}"·}"·}"·}"·}</text>
<text class="d" x="1062" y="735" textLength="104" lengthAdjust="spacingAndGlyphs">bewertet.¶</text>
<!-- field boxes in paragraph -->
<g fill="none" stroke="#555" stroke-width=".9" stroke-dasharray="1.200 1.200">
<rect x="842" y="617" width="7.500" height="25"/><rect x="878" y="617" width="7.500" height="25"/><rect x="1058" y="617" width="7" height="25"/><rect x="1216.500" y="617" width="6.500" height="25"/><rect x="1252" y="617" width="7" height="25"/>
<rect x="620" y="650" width="7" height="26"/><rect x="732" y="650" width="7.500" height="26"/><rect x="766" y="650" width="7" height="26"/><rect x="947" y="650" width="7.500" height="26"/><rect x="1148" y="650" width="8" height="26"/><rect x="1183" y="650" width="7.700" height="26"/><rect x="1364" y="650" width="8" height="26"/>
<rect x="729.500" y="683" width="7.500" height="25"/><rect x="765" y="683" width="7" height="25"/><rect x="944" y="683" width="8" height="25"/><rect x="1133.500" y="683" width="7.500" height="25"/><rect x="1169.500" y="683" width="7.500" height="25"/><rect x="1349.500" y="683" width="7.500" height="25"/>
<rect x="940" y="715" width="7" height="26"/><rect x="964" y="715" width="7" height="26"/><rect x="986.500" y="715" width="7.500" height="26"/><rect x="1009" y="715" width="7" height="26"/><rect x="1032.500" y="715" width="6.500" height="26"/><rect x="1054" y="715" width="7.500" height="26"/>
</g>
<text class="d" x="581" y="785" textLength="116.500" lengthAdjust="spacingAndGlyphs">Ort,·Datum¶</text>
<text class="d" x="582" y="836" textLength="12" lengthAdjust="spacingAndGlyphs">¶</text>
<!-- signature table -->
<text class="d" x="581" y="883" textLength="11" lengthAdjust="spacingAndGlyphs">¤</text>
<text class="d" x="875.400" y="883" textLength="10.600" lengthAdjust="spacingAndGlyphs">¤</text>
<text class="d" x="1137" y="883" textLength="10" lengthAdjust="spacingAndGlyphs">¤</text>
<text class="m" x="1414" y="879" textLength="7.500" lengthAdjust="spacingAndGlyphs">¤</text>
<path d="M571 891.500H1412" stroke="#000" stroke-width="1.400"/>
<text class="d" x="581" y="913" textLength="87" lengthAdjust="spacingAndGlyphs">Prüfer·1¤</text>
<text class="d" x="875" y="913" textLength="87" lengthAdjust="spacingAndGlyphs">Prüfer·2¤</text>
<text class="d" x="1137" y="913" textLength="86" lengthAdjust="spacingAndGlyphs">Prüfer·3¤</text>
<text class="m" x="1414" y="908" textLength="7.500" lengthAdjust="spacingAndGlyphs">¤</text>
</g>

<!-- right scrollbar -->
<rect x="1899.500" y="168" width="20.500" height="884" fill="#a0bee8"/>
<rect x="1900" y="199" width="19.500" height="790" fill="url(#trk)"/>
<path d="M1905 173.500H1914.500" stroke="#3a4c70" stroke-width="1.500"/>
<rect x="1900.500" y="178" width="19" height="19" fill="#cfd8e4" stroke="#8fa6c4"/>
<rect x="1904" y="182" width="7" height="7" fill="#eef2f7" stroke="#55606f" stroke-width=".8"/><rect x="1908.500" y="186" width="7" height="7" fill="#eef2f7" stroke="#55606f" stroke-width=".8"/>
<path d="M1904 212.500L1910 207L1916 212.500Z" fill="#3e5078"/>
<rect x="1900.500" y="377.500" width="18" height="221" fill="url(#thumb)" stroke="#4f6596"/>
<path d="M1906 484.500h8M1906 486.500h8M1906 488.500h8M1906 490.500h8" stroke="#7a7f88"/>
<path d="M1904 975L1915.500 975L1909.700 981Z" fill="#3e5078"/>
<path d="M1905 1000.500h6M1906 1000l2-3.500 2 3.500zM1905 1002h6" stroke="#222" fill="#222" stroke-width="1"/>
<circle cx="1908" cy="1019.500" r="2.700" fill="#9a9a9a" stroke="#333"/>
<path d="M1905 1038h6M1905 1040h6M1906 1040l2 3.500 2-3.500z" stroke="#222" fill="#222" stroke-width="1"/>

<!-- status bar -->
<text class="st" x="8" y="1071" textLength="77" lengthAdjust="spacingAndGlyphs">Seite: 1 von 2</text>
<text class="st" x="102.700" y="1071" textLength="61" lengthAdjust="spacingAndGlyphs">Um: 21 cm</text>
<text class="st" x="182" y="1071" textLength="61" lengthAdjust="spacingAndGlyphs">Wörter: 57</text>
<path d="M172.500 1054V1076M252.500 1054V1076M290.500 1054V1076" stroke="#8fb0dc"/>
<path d="M262 1065L272 1060L282 1066L272 1072Z" fill="#5f83c8" stroke="#3a5a9a" stroke-width=".8"/><path d="M266 1064L274 1060L279 1064L271 1068Z" fill="#f1f4f8"/>
<path d="M271 1056L280 1064M280 1056L271 1064" stroke="#e8362c" stroke-width="2.600"/>
<path d="M1574.500 1053V1077" stroke="#dbe8fa"/>
<rect x="1582.500" y="1055.500" width="112" height="21.500" rx="2" fill="#b3cdee" stroke="#7a9cd0"/>
<rect x="1583" y="1056" width="22" height="21" fill="url(#act)"/>
<path d="M1627 1056V1077M1649 1056V1077M1671 1056V1077M1605 1056V1077" stroke="#9bb9e4"/>
<rect x="1587.500" y="1059.500" width="12" height="13" fill="#fff" stroke="#555"/><path d="M1589.500 1062h8M1589.500 1064.500h8M1589.500 1067h8M1589.500 1069.500h8" stroke="#555"/>
<path d="M1609 1060h7v12h-7zM1616 1060h7v12h-7z" fill="#f2f4f7" stroke="#5b5b5b"/>
<rect x="1630" y="1059.500" width="12" height="11" fill="#fff" stroke="#555"/><circle cx="1640" cy="1071" r="4" fill="#3b83c8" stroke="#2f6a30" stroke-width=".8"/>
<path d="M1654 1060h11M1657 1063.500h8M1654 1067h11M1657 1070.500h8M1654 1074h11" stroke="#666" stroke-width="1.200" stroke-dasharray="8 1"/>
<path d="M1676 1061h13M1676 1064h13M1676 1067h13M1676 1070h13M1676 1073h13" stroke="#5c5c5c" stroke-width="1.300"/>
<text class="st" x="1704" y="1070.500" textLength="34" lengthAdjust="spacingAndGlyphs">100 %</text>
<path d="M1768 1066.500H1895" stroke="#dfe9f7"/>
<circle cx="1758" cy="1065.500" r="9.800" fill="url(#zoomb)" stroke="#5a7096"/><path d="M1753 1065.500H1763" stroke="#3f5a80" stroke-width="2.400"/>
<circle cx="1905" cy="1065.500" r="9.800" fill="url(#zoomb)" stroke="#5a7096"/><path d="M1900 1065.500H1910M1905 1060.500V1070.500" stroke="#3f5a80" stroke-width="2.400"/>
<path d="M1826.500 1057.500H1836.500V1067.500L1831.500 1072L1826.500 1067.500Z" fill="#f0f4fa" stroke="#5a7096"/>
</svg>
</div>
</body>
</html>
